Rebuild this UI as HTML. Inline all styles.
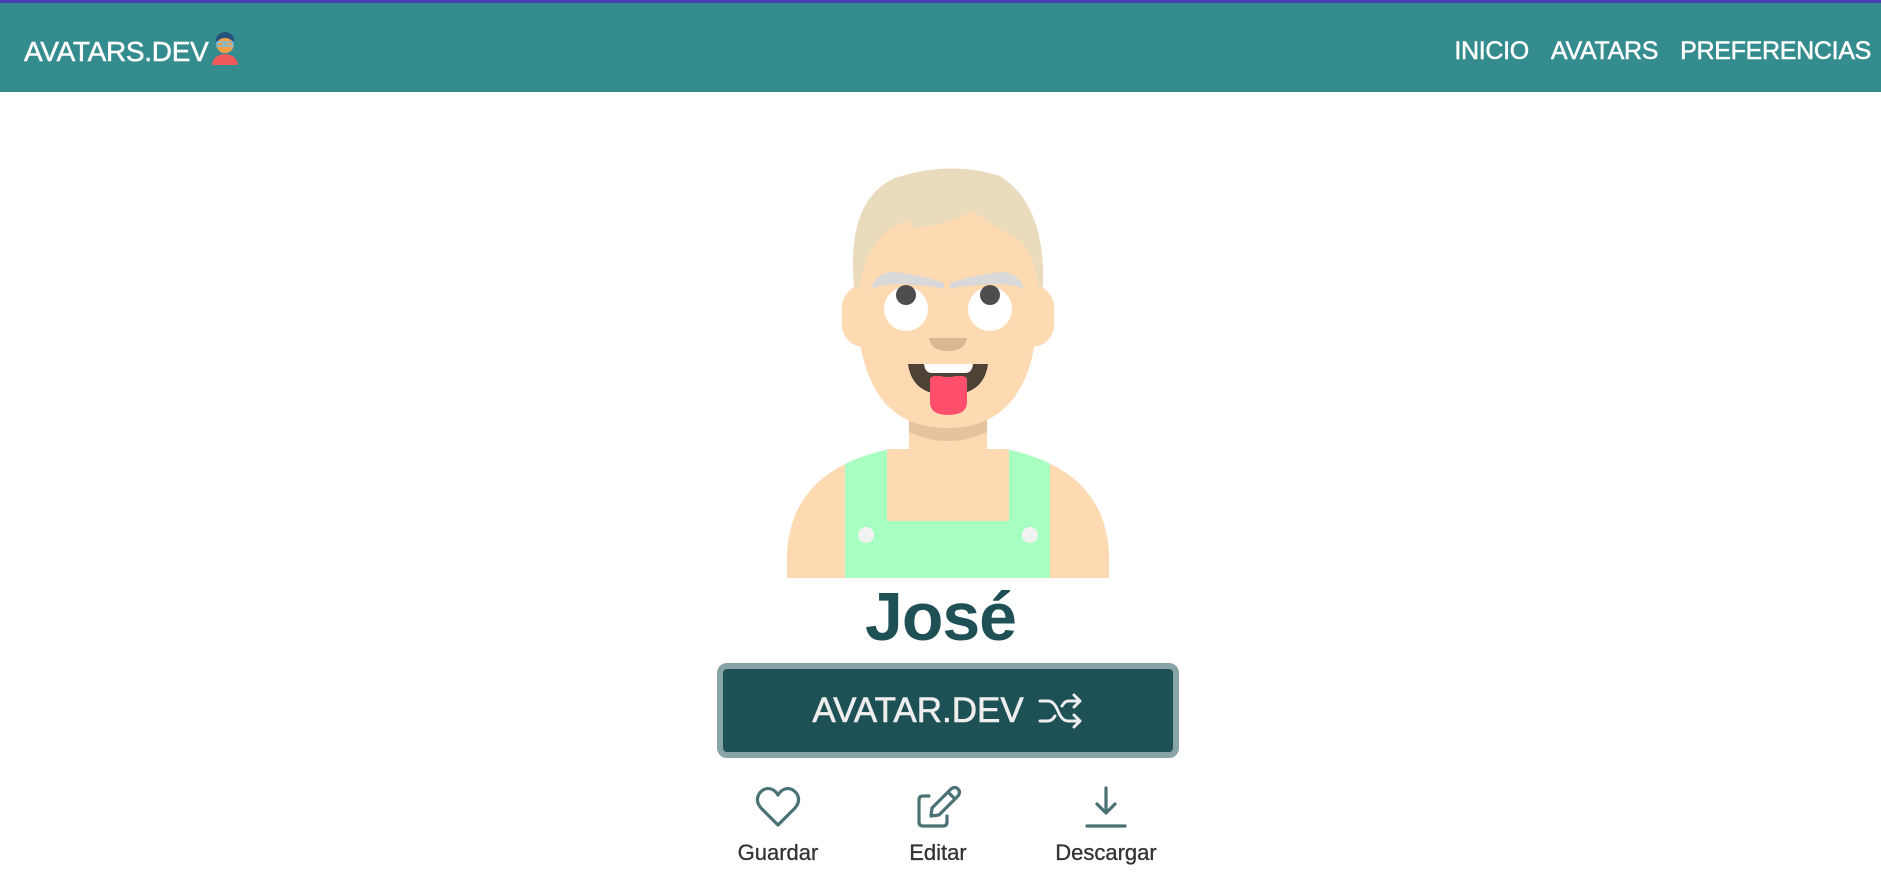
<!DOCTYPE html>
<html><head><meta charset="utf-8"><style>
*{margin:0;padding:0;box-sizing:border-box}
body{width:1881px;height:875px;background:#fff;font-family:"Liberation Sans",sans-serif;position:relative;overflow:hidden}
.hdr{position:absolute;left:0;top:0;width:1881px;height:92px;background:#358c8f;border-top:3px solid #4a3fb5}
.logo{position:absolute;left:24px;top:28px;color:#fff;font-size:28px;letter-spacing:-0.3px;-webkit-text-stroke:0.5px #fff}
.nav{position:absolute;right:10px;top:34px;color:#fff;font-size:25px;letter-spacing:-0.3px;-webkit-text-stroke:0.5px #fff}
.nav span{margin-left:22px}
.name{position:absolute;left:0;width:1881px;text-align:center;top:578px;font-size:68px;font-weight:bold;color:#1e5055;letter-spacing:-1px}
.btn{position:absolute;left:717px;top:663px;width:462px;height:95px;background:#1e5155;border:6px solid #88a4a6;border-radius:10px;color:#eee;font-size:35px;display:flex;align-items:center;justify-content:center;-webkit-text-stroke:0.6px #eee}
.act{position:absolute;top:786px;width:140px;text-align:center;color:#333;font-size:22px;-webkit-text-stroke:0.3px #333}
.act svg{display:block;margin:0 auto 12px}
</style></head><body>
<div class="hdr">
<div class="logo">AVATARS.DEV<svg width="30" height="34" viewBox="0 0 30 34" style="vertical-align:-4px;margin-left:2px"><path d="M2 34 Q3 24 15 23 Q27 24 28 34Z" fill="#f05a5a"/><circle cx="15" cy="13" r="9" fill="#f4a04b"/><path d="M6 14 Q4 2 15 1 Q26 2 24 14 Q22 7 15 7 Q8 7 6 14Z" fill="#24527a"/><rect x="7" y="11" width="7" height="4" fill="none" stroke="#6cc0e8" stroke-width="1.5"/><rect x="16" y="11" width="7" height="4" fill="none" stroke="#6cc0e8" stroke-width="1.5"/></svg></div>
<div class="nav"><span>INICIO</span><span>AVATARS</span><span>PREFERENCIAS</span></div>
</div>
<svg style="position:absolute;left:0;top:0" width="1881" height="875">
<defs><clipPath id="b"><path d="M787 578 V555 Q790 470 890 449 H1006 Q1106 470 1109 555 V578 Z"/></clipPath></defs>
<path d="M787 578 V555 Q790 470 890 449 H1006 Q1106 470 1109 555 V578 Z" fill="#fddab2"/>
<g clip-path="url(#b)"><rect x="845" y="440" width="205" height="140" fill="#a8ffc2"/><rect x="887" y="440" width="122" height="81" fill="#fddab2"/></g>
<circle cx="866" cy="535" r="8" fill="#f2f2f2"/><circle cx="1030" cy="535" r="8" fill="#f2f2f2"/>
<rect x="909" y="400" width="78" height="50" fill="#fddab2"/>
<path d="M909 410 H987 V432 Q948 450 909 432Z" fill="#e5c39e"/>
<rect x="842" y="285" width="212" height="62" rx="22" fill="#fddab2"/>
<path d="M857 300 V255 Q857 200 905 200 H990 Q1038 200 1038 255 V300 Q1038 428 947 428 Q857 428 857 300Z" fill="#fddab2"/>
<path d="M854 287 Q846 200 895 178 Q950 160 1000 176 Q1046 205 1043 287 L1038 287 Q1035 245 1010 234 Q985 222 973 210 Q950 225 912 228 L909 220 Q866 234 860 287 Z" fill="#eadbbd"/>
<path d="M871 289 Q876 272 895 272 Q925 276 944 283 L944 289 Q920 284 900 284 Q880 284 871 289Z M1024 289 Q1019 272 1000 272 Q970 276 950 283 L950 289 Q975 284 995 284 Q1015 284 1024 289Z" fill="#d9d9d9"/>
<circle cx="906" cy="309" r="22" fill="#fff"/><circle cx="990" cy="309" r="22" fill="#fff"/>
<circle cx="906" cy="295" r="10" fill="#4d4d4d"/><circle cx="990" cy="295" r="10" fill="#4d4d4d"/>
<path d="M929 338 H967 Q965 351 948 351 Q931 351 929 338Z" fill="#d9b893"/>
<path d="M908 364 H988 Q984 395 948 395 Q912 395 908 364Z" fill="#4e4136"/>
<path d="M924 364 H973 Q972 373 965 373 H932 Q925 373 924 364Z" fill="#fff"/>
<path d="M930 380 Q930 375 940 376 Q948 378 956 376 Q967 375 967 380 V402 Q967 415 948 415 Q930 415 930 402Z" fill="#ff4f6d"/>
</svg>
<div class="name">José</div>
<div class="btn">AVATAR.DEV<svg width="46" height="40" viewBox="0 0 46 40" style="margin-left:14px" fill="none" stroke="#eee" stroke-width="3" stroke-linecap="round" stroke-linejoin="round"><path d="M2 10 H10 Q16 10 20 20 Q24 30 30 30 H42 M36 24 L42 30 L36 36 M2 30 H10 Q14 30 17 25 M24 15 Q27 10 30 10 H42 M36 4 L42 10 L36 16"/></svg></div>
<div class="act" style="left:708px"><svg width="46" height="42" viewBox="0 0 46 42" fill="none" stroke="#4a7275" stroke-width="3.2" stroke-linejoin="round"><path d="M23 39 L6 22 Q0 15 4 8 Q9 1 16 3 Q20 4 23 9 Q26 4 30 3 Q37 1 42 8 Q46 15 40 22Z"/></svg>Guardar</div>
<div class="act" style="left:868px"><svg width="46" height="42" viewBox="0 0 46 42" fill="none" stroke="#4a7275" stroke-width="3.2" stroke-linejoin="round" stroke-linecap="round"><path d="M14 10 H8 Q4 10 4 14 V36 Q4 40 8 40 H28 Q32 40 32 36 V30"/><path d="M16 30 L17 22 L36 3 Q40 0 43 3 Q46 6 43 10 L24 29Z M33 6 L40 13"/></svg>Editar</div>
<div class="act" style="left:1036px"><svg width="46" height="42" viewBox="0 0 46 42" fill="none" stroke="#4a7275" stroke-width="3.2" stroke-linecap="round" stroke-linejoin="round"><path d="M23 2 V26 M14 18 L23 27 L32 18 M4 40 H42"/></svg>Descargar</div>
</body></html>
